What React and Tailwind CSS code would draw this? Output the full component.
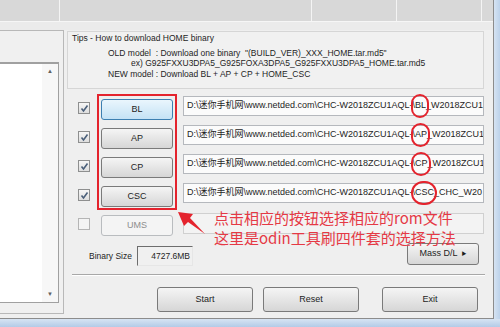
import React from 'react';

const Check = () => (
  <div className="w-[12px] h-[12px] border border-[#8e8f8f] bg-linear-to-b from-[#f6f6f6] to-[#dedede] flex items-center justify-center">
    <svg width="9" height="9" viewBox="0 0 9 9">
      <path d="M1.5 4.5 L3.5 7 L7.5 1.5" fill="none" stroke="#4a5f7a" strokeWidth="1.6" />
    </svg>
  </div>
);

const Btn = ({ children, blue, disabled, className = '' }) => (
  <div
    className={
      'flex items-center justify-center rounded-[3px] border text-[9px] ' +
      (blue
        ? 'border-[#3c7fb1] bg-linear-to-b from-[#eaf6fd] to-[#c4e2f5] text-[#1e1e1e] '
        : disabled
        ? 'border-[#b9bcbf] bg-[#f4f4f4] text-[#8d8d8d] '
        : 'border-[#7a7a7a] bg-linear-to-b from-[#f5f5f5] to-[#d6d6d6] text-[#1e1e1e] ') +
      className
    }
  >
    {children}
  </div>
);

// red hand-drawn ring around the file tag
const Circled = ({ children }) => (
  <span className="relative">
    {children}
    <span className="absolute -left-[4px] -right-[3px] -top-[5px] -bottom-[5px] rounded-full border-2 border-[#e4232d]" />
  </span>
);

const PathBox = ({ tag, rest }) => (
  <div className="ml-[10px] w-[301px] h-[20px] border border-[#b5b8bd] bg-[#fbfbfb] flex items-center pl-[3px] overflow-x-clip whitespace-nowrap text-[9px] text-[#1e1e1e]">
    <span>D:\迷你手机网\www.netded.com\CHC-W2018ZCU1AQL-\</span>
    <Circled>{tag}</Circled>
    <span>{rest}</span>
  </div>
);

const rows = [
  { tag: 'BL', rest: '_W2018ZCU1', blue: true },
  { tag: 'AP', rest: '_W2018ZCU1' },
  { tag: 'CP', rest: '_W2018ZCU1' },
  { tag: 'CSC', rest: '_CHC_W20' },
];

export default function App() {
  return (
    <div className="relative w-[500px] h-[327px] flex flex-col bg-[#c9dbef] overflow-hidden font-[family-name:'Liberation_Sans','Noto_Sans_CJK_SC',sans-serif] text-[#1e1e1e]">
      <div className="flex h-[319px]">
        <div className="w-[494px] h-[319px] flex flex-col bg-[#efefef] border-r border-b border-[#8c8c8c]">
          {/* top strip */}
          <div className="flex h-[22px] bg-[#d8d8d8] border-b border-[#f6f6f6]">
            <div className="w-[60px] border-r border-[#f4f4f4]" />
            <div className="w-[252px] border-r border-[#f4f4f4]" />
            <div className="w-[85px] border-r border-[#f4f4f4]" />
            <div className="w-[85px] border-r border-[#f4f4f4]" />
            <div className="flex-1" />
          </div>
          <div className="h-[8px] bg-[#ebebeb]" />

          <div className="flex flex-1">
            {/* left log panel */}
            <div className="w-[64px] h-[284px] border-t border-r border-b border-[#b8b8b8] bg-[#f0f0f0]">
              <div className="mt-[31px] h-[241px] w-[59px] border-t-2 border-r border-b border-[#a0a0a0] flex">
                <div className="w-[42px] bg-white" />
                <div className="flex-1 bg-[#f7f7f7] flex flex-col justify-between items-center py-[3px] text-[6px] text-[#606060]">
                  <span>▲</span>
                  <span>▼</span>
                </div>
              </div>
            </div>

            {/* right area */}
            <div className="flex-1 flex flex-col pl-[3px]">
              {/* tips */}
              <div className="mt-[1px] w-[417px] h-[58px] border border-[#d6d6d6] bg-[#f1f1f1] pl-[4px] text-[8.5px] leading-[10.5px] whitespace-pre">
                <div className="mt-[1px]">Tips - How to download HOME binary</div>
                <div className="mt-[4px] pl-[36px]">OLD model  : Download one binary  "(BUILD_VER)_XXX_HOME.tar.md5"</div>
                <div className="pl-[59px]">ex) G925FXXU3DPA5_G925FOXA3DPA5_G925FXXU3DPA5_HOME.tar.md5</div>
                <div className="pl-[36px]">NEW model : Download BL + AP + CP + HOME_CSC</div>
              </div>

              {/* file rows */}
              <div className="pt-[7px] flex flex-col">
                {rows.map((r) => (
                  <div key={r.tag} className="flex items-start h-[29px]">
                    <div className="ml-[11px] mt-[6px]">
                      <Check />
                    </div>
                    <Btn blue={r.blue} className="ml-[11px] mt-[3px] w-[72px] h-[21px]">{r.tag}</Btn>
                    <PathBox tag={r.tag} rest={r.rest} />
                  </div>
                ))}
                <div className="flex items-start h-[29px]">
                  <div className="ml-[11px] mt-[6px] w-[12px] h-[12px] border border-[#b5b5b5] bg-[#f4f4f4]" />
                  <Btn disabled className="ml-[11px] mt-[3px] w-[72px] h-[21px]">UMS</Btn>
                  <div className="ml-[10px] mt-[1px] w-[301px] h-[21px] border border-[#d0d0d0] bg-[#f3f3f3]" />
                </div>
              </div>

              {/* binary size */}
              <div className="flex items-start h-[26px]">
                <div className="ml-[22px] mt-[9px] text-[8.5px]">Binary Size</div>
                <div className="ml-[5px] mt-[5px] w-[56px] h-[20px] border-t border-l border-[#6d6d6d] border-r border-b border-r-[#e6e6e6] border-b-[#e6e6e6] bg-[#f0f0f0] flex items-center justify-end pr-[2px] text-[8.5px]">
                  4727.6MB
                </div>
                <Btn className="ml-[214px] mt-[2px] w-[72px] h-[22px] gap-[4px]">
                  <span>Mass D/L</span>
                  <span className="text-[5px]">▶</span>
                </Btn>
              </div>

              <div className="mt-[7px] ml-[5px] w-[413px] h-[2px] border-t border-[#a8a8a8] border-b border-b-white" />

              {/* bottom buttons */}
              <div className="flex mt-[11px] ml-[90px]">
                <Btn className="w-[96px] h-[25px]">Start</Btn>
                <Btn className="ml-[10px] w-[96px] h-[25px]">Reset</Btn>
                <Btn className="ml-[23px] w-[96px] h-[25px]">Exit</Btn>
              </div>
            </div>
          </div>
        </div>
        <div className="flex-1 bg-linear-to-r from-[#d6e3f2] to-[#bcd2ea]" />
      </div>
      <div className="h-[8px] bg-linear-to-b from-[#d7e4f3] to-[#b3cbe7]" />

      {/* annotations */}
      <div className="absolute left-[97px] top-[94px] w-[80px] h-[116px] border-2 border-[#e4232d]" />
      <svg className="absolute left-0 top-0 pointer-events-none" width="500" height="327">
        <polygon points="178,212 184,226 188,222 205,234 190,218 193,214" fill="#e4232d" />
      </svg>
      <div className="absolute left-[214px] top-[208px] text-[15px] leading-[20px] text-[#e53945] font-[family-name:'Noto_Sans_CJK_SC',sans-serif] whitespace-nowrap">
        <div>点击相应的按钮选择相应的rom文件</div>
        <div>这里是odin工具刷四件套的选择方法</div>
      </div>
    </div>
  );
}
